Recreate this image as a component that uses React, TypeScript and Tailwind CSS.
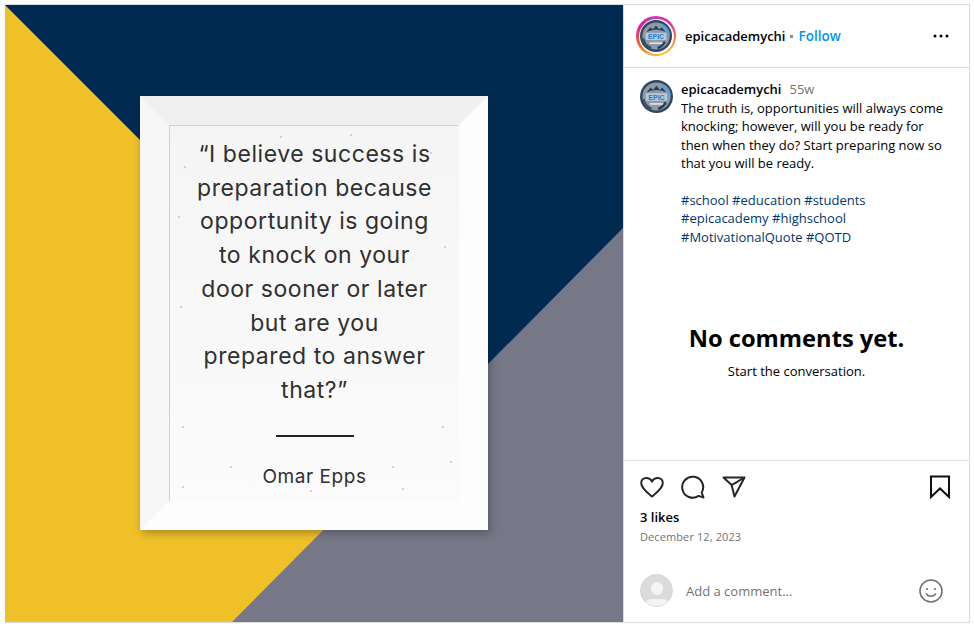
import React from "react";

const Badge = ({ size }: { size: number }) => (
  <svg width={size} height={size} viewBox="0 0 40 40" className="block">
    <circle cx="20" cy="20" r="20" fill="#33475f" />
    <circle cx="20" cy="20" r="17" fill="#8d9aa8" />
    <path d="M8 15 L13 9 L16 12 L20 7 L24 12 L27 9 L32 15 L27 13 L20 12 L13 13 Z" fill="#2a3a50" />
    <path d="M27 6 A16 16 0 0 1 36 20" fill="none" stroke="#4fa3d8" strokeWidth="3" />
    <path d="M31 27 A14 14 0 0 1 22 35" fill="none" stroke="#2a3a50" strokeWidth="3" />
    <path d="M4 23 A16 16 0 0 0 14 35" fill="none" stroke="#3f5269" strokeWidth="3" />
    <rect x="7" y="16" width="26" height="9" rx="1" fill="#b7c9d8" />
    <text x="20" y="24" textAnchor="middle" fontSize="8.5" fontWeight="700" fill="#1f78c8" fontFamily="Liberation Sans, sans-serif">EPIC</text>
    <rect x="12" y="28" width="16" height="2" fill="#dfe5ea" />
  </svg>
);

const specks = [
  [12, 300], [14, 40], [10, 180], [60, 340], [110, 10], [140, 364], [272, 300], [274, 120],
  [260, 26], [8, 90], [222, 340], [280, 335], [180, 8], [12, 360], [232, 362],
];

const QuoteFrame = () => (
  <div className="absolute left-[135px] top-[91px] w-[348px] h-[434px] border-[29px] border-t-[#f0f0f0] border-l-[#f6f6f6] border-r-[#fdfdfd] border-b-[#fdfdfd] shadow-[2px_3px_8px_rgba(30,30,40,0.35)]">
    <div className="relative w-full h-full bg-gradient-to-b from-[#f5f5f5] to-[#fbfbfb] border-t border-l border-[#cfd2d6] flex flex-col items-center text-[#303030] [font-family:Inter,sans-serif] text-[23px] tracking-[0.55px] leading-[33.7px] text-center pt-[12px]">
      {specks.map(([x, y], i) => (
        <span key={i} className="absolute w-[2px] h-[2px] rounded-full bg-[#c4c4c4]" style={{ left: x, top: y }} />
      ))}
      <p className="relative">“I believe success is</p>
      <p className="relative">preparation because</p>
      <p className="relative">opportunity is going</p>
      <p className="relative">to knock on your</p>
      <p className="relative">door sooner or later</p>
      <p className="relative">but are you</p>
      <p className="relative">prepared to answer</p>
      <p className="relative">that?”</p>
      <div className="relative w-[78px] h-[2px] bg-[#222222] mt-[27px]" />
      <p className="relative text-[19px] leading-[26px] mt-[27px]">Omar Epps</p>
    </div>
  </div>
);

export default function App() {
  return (
    <div className="w-[974px] h-[629px] bg-white pt-[4px] pl-[5px] [font-family:'Open_Sans',sans-serif]">
      <div className="w-[965px] h-[619px] flex border border-l-0 border-[#dbdbdb]">
        <div className="relative w-[618px] h-[617px] shrink-0 overflow-hidden bg-[#012a52]">
          <svg width="618" height="617" viewBox="0 0 618 617" className="absolute left-0 top-0">
            <polygon points="0,0 618,0 618,617 0,617" fill="#012a52" />
            <polygon points="0,0 500,500 500,617 0,617" fill="#f0c028" />
            <polygon points="618,223 618,617 227,617" fill="#777887" />
          </svg>
          <QuoteFrame />
        </div>
        <div className="flex-1 min-w-0 flex flex-col border-l border-[#dbdbdb] text-black">
          <div className="h-[63px] flex items-center pl-[12px] pr-[20px] border-b border-[#dbdbdb] shrink-0">
            <div className="w-[40px] h-[40px] rounded-full bg-[conic-gradient(from_200deg,#f9a825,#f5523c,#d6249f,#c837c0,#e0309a,#f77737,#fcc13a,#f9a825)] flex items-center justify-center">
              <div className="w-[35px] h-[35px] rounded-full bg-white flex items-center justify-center">
                <Badge size={32} />
              </div>
            </div>
            <span className="ml-[9px] text-[13px] font-semibold leading-[18px]">epicacademychi</span>
            <span className="mx-[5px] w-[3px] h-[3px] bg-[#8e8e8e]" />
            <span className="text-[13.5px] font-semibold leading-[18px] text-[#0095f6]">Follow</span>
            <svg width="16" height="4" viewBox="0 0 16 4" className="ml-auto" fill="#000">
              <circle cx="2" cy="2" r="1.5" />
              <circle cx="8" cy="2" r="1.5" />
              <circle cx="14" cy="2" r="1.5" />
            </svg>
          </div>
          <div className="flex-1 min-h-0 flex flex-col">
            <div className="flex pl-[16px] pt-[12px]">
              <Badge size={33} />
              <div className="ml-[8px] text-[13px] leading-[18.5px]">
                <div>
                  <span className="font-semibold">epicacademychi</span>
                  <span className="ml-[8px] text-[#737373]">55w</span>
                </div>
                <p>The truth is, opportunities will always come</p>
                <p>knocking; however, will you be ready for</p>
                <p>then when they do? Start preparing now so</p>
                <p>that you will be ready.</p>
                <div className="mt-[18px] text-[#00376b]">
                  <p>#school #education #students</p>
                  <p>#epicacademy #highschool</p>
                  <p>#MotivationalQuote #QOTD</p>
                </div>
              </div>
            </div>
            <div className="flex flex-col items-center mt-[77px]">
              <p className="text-[23.7px] font-bold leading-[30px]">No comments yet.</p>
              <p className="text-[13px] leading-[18px] mt-[9px]">Start the conversation.</p>
            </div>
          </div>
          <div className="h-[162px] border-t border-[#e4e4e4] shrink-0 px-[16px] flex flex-col">
            <div className="flex items-center h-[24px] mt-[14px] text-[#262626]">
              <svg width="24" height="24" viewBox="0 0 24 24" fill="none" stroke="currentColor" strokeWidth="2" strokeLinejoin="round">
                <path d="M12 21.5 C9 19 1.2 13.6 1.2 8 C1.2 4.8 3.6 3 6.2 3 C8.6 3 10.8 4.2 12 6.6 C13.2 4.2 15.4 3 17.8 3 C20.4 3 22.8 4.8 22.8 8 C22.8 13.6 15 19 12 21.5 Z" />
              </svg>
              <svg width="24" height="24" viewBox="0 0 24 24" fill="none" stroke="currentColor" strokeWidth="2" strokeLinejoin="round" className="ml-[17px]">
                <path d="M20.7 17.6 A10.5 10.5 0 1 0 17.6 20.9 L22.5 22.5 Z" />
              </svg>
              <svg width="24" height="24" viewBox="0 0 24 24" fill="none" stroke="currentColor" strokeWidth="2" strokeLinejoin="round" className="ml-[17px]">
                <path d="M22.5 2.5 L1.5 2.5 L9.6 10.1 L12.5 21.5 Z" />
                <path d="M9.6 10.1 L22.5 2.5" />
              </svg>
              <svg width="24" height="24" viewBox="0 0 24 24" fill="none" stroke="#111" strokeWidth="2" strokeLinejoin="miter" className="ml-auto mr-[1px]">
                <path d="M3 1.5 L21 1.5 L21 22 L12 13.5 L3 22 Z" />
              </svg>
            </div>
            <p className="text-[13px] font-semibold leading-[18px] mt-[9px]">3 likes</p>
            <p className="text-[11px] leading-[14px] mt-[4px] text-[#737373] tracking-[0.1px]">December 12, 2023</p>
            <div className="flex items-center mt-[30px]">
              <div className="relative w-[33px] h-[33px] rounded-full overflow-hidden bg-[#dbdbdb] border border-[#d8d8d8]">
                <div className="absolute left-[10px] top-[7px] w-[12px] h-[13px] rounded-full bg-[#f4f4f4]" />
                <div className="absolute left-[3px] top-[24px] w-[26px] h-[16px] rounded-full bg-[#f4f4f4]" />
              </div>
              <span className="ml-[13px] text-[13px] leading-[18px] text-[#737373]">Add a comment...</span>
              <svg width="24" height="24" viewBox="0 0 24 24" fill="none" stroke="#737373" strokeWidth="1.6" strokeLinecap="round" className="ml-auto mr-[10px]">
                <circle cx="12" cy="12" r="11" />
                <circle cx="8" cy="10" r="1.1" fill="#737373" stroke="none" />
                <circle cx="16" cy="10" r="1.1" fill="#737373" stroke="none" />
                <path d="M7.5 15 C9.5 18 14.5 18 16.5 15" />
              </svg>
            </div>
          </div>
        </div>
      </div>
    </div>
  );
}
